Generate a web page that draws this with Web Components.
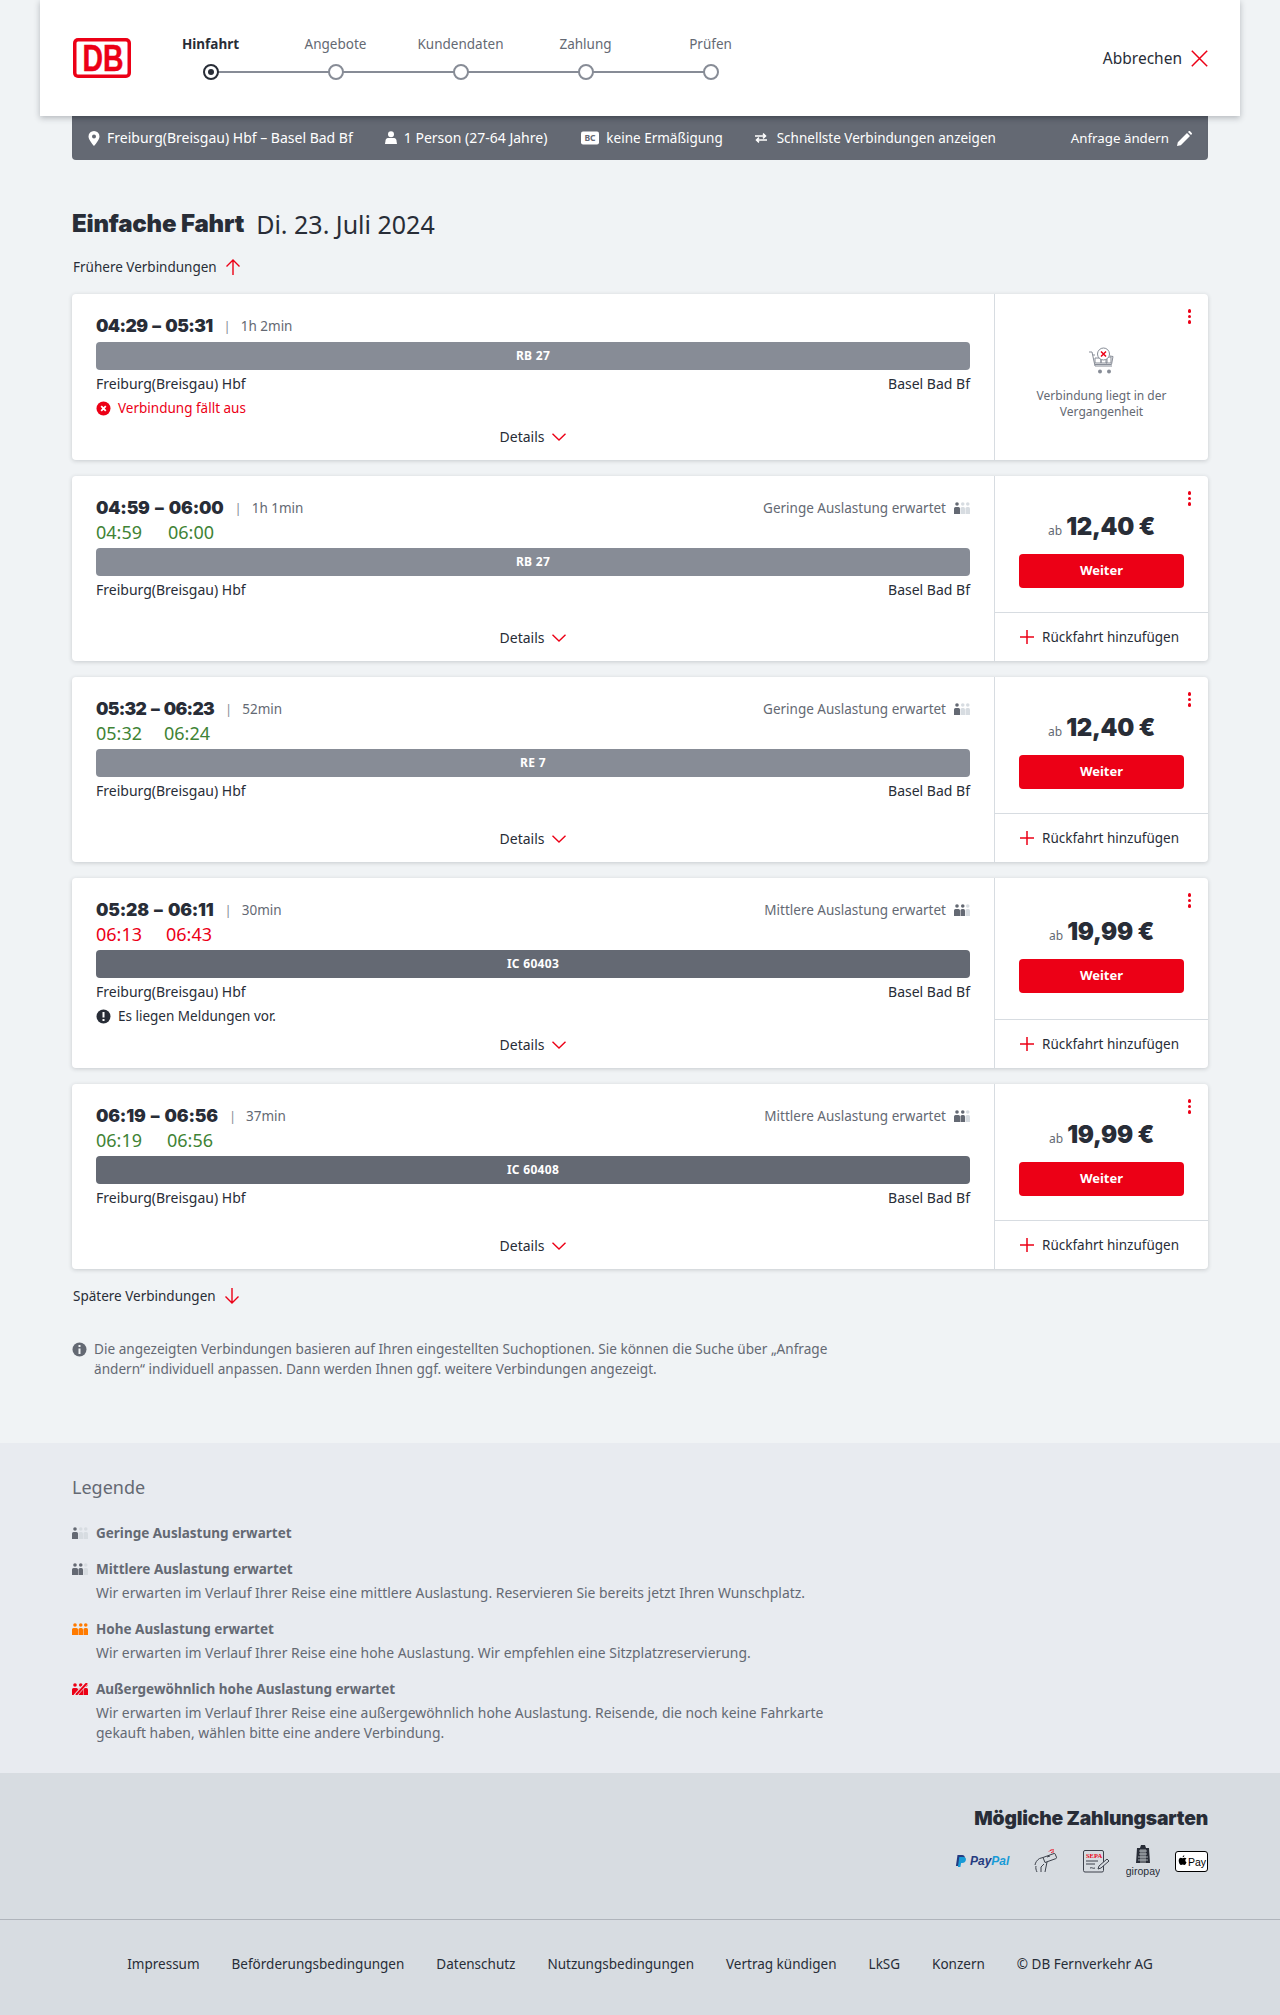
<!DOCTYPE html>
<html lang="de">
<head>
<meta charset="utf-8">
<title>Einfache Fahrt</title>
<style>
  html, body { margin: 0; padding: 0; }
  body {
    display: flex;
    flex-direction: column;
    min-height: 100vh;
    background: #f0f3f5;
    color: #282d37;
    font-family: "Noto Sans", "Liberation Sans", sans-serif;
    font-size: 13.500px;
    line-height: 20px;
  }
  :root { --head: Inter, "Liberation Sans", sans-serif; --red: #ec0016; --ink: #282d37; --grey: #646973; --mid: #878c96; --line: #d7dce1; }
</style>
</head>
<body>

<app-header></app-header>
<search-bar></search-bar>

<result-list>
  <span slot="title">Einfache Fahrt</span>
  <span slot="date">Di. 23. Juli 2024</span>

  <connection-card times="04:29 – 05:31" track="-.6" dur="1h 2min" train="RB 27" tone="light">
    <msg-line slot="msg" kind="error">Verbindung fällt aus</msg-line>
    <past-box slot="side"></past-box>
  </connection-card>

  <connection-card times="04:59 – 06:00" dur="1h 1min" rt1="04:59" rt2="06:00" rt-gap="26" load="1" train="RB 27" tone="light">
    <price-box slot="side" price="12,40 €"></price-box>
  </connection-card>

  <connection-card times="05:32 – 06:23" track="-.7" dur="52min" rt1="05:32" rt2="06:24" rt-gap="22" load="1" train="RE 7" tone="light">
    <price-box slot="side" price="12,40 €"></price-box>
  </connection-card>

  <connection-card times="05:28 – 06:11" dur="30min" rt1="06:13" rt2="06:43" rt-gap="24" late load="2" train="IC 60403" tone="dark">
    <msg-line slot="msg" kind="info">Es liegen Meldungen vor.</msg-line>
    <price-box slot="side" price="19,99 €"></price-box>
  </connection-card>

  <connection-card times="06:19 – 06:56" dur="37min" rt1="06:19" rt2="06:56" rt-gap="25" load="2" train="IC 60408" tone="dark">
    <price-box slot="side" price="19,99 €"></price-box>
  </connection-card>
</result-list>

<load-legend></load-legend>
<payment-methods></payment-methods>
<site-footer></site-footer>

<script>
const chevron = `<svg width="14" height="8" viewBox="0 0 14 8" fill="none" stroke="#ec0016" stroke-width="1.4"><path d="M.5.8 7 7 13.5.8"/></svg>`;

class AppHeader extends HTMLElement {
  constructor() {
    super();
    this.attachShadow({ mode: 'open' });
    const steps = ['Hinfahrt', 'Angebote', 'Kundendaten', 'Zahlung', 'Prüfen'];
    this.shadowRoot.innerHTML = `
      <style>
        :host { display: flex; align-items: center; position: relative; z-index: 2; height: 116px; margin: 0 40px; padding: 0 32px; background: #fff; box-shadow: 0 2px 6px rgba(40,45,55,.3); }
        .logo { display: block; margin: 0 0 0 1px; overflow: visible; }
        .logo text { font-family: "Liberation Sans", sans-serif; font-weight: 700; }
        ol { display: flex; list-style: none; margin: -2px 0 0 17px; padding: 0; }
        li { position: relative; width: 125px; display: flex; flex-direction: column; align-items: center; gap: 10px; color: var(--grey); }
        li b { color: var(--ink); font-weight: 700; }
        li span, li b { line-height: 20px; }
        i { display: block; position: relative; z-index: 1; box-sizing: border-box; width: 16px; height: 16px; border-radius: 50%; border: 2px solid var(--mid); background: #fff; }
        li:first-child i { border-color: var(--ink); }
        li:first-child i::after { content: ""; position: absolute; inset: 3px; border-radius: 50%; background: var(--ink); }
        li + li::before { content: ""; position: absolute; height: 2px; left: -62px; width: 125px; bottom: 7px; background: var(--mid); }
        a { margin-left: auto; display: flex; align-items: center; gap: 9px; font-size: 15.500px; }
      </style>
      <svg class="logo" width="58" height="40" viewBox="0 0 58 40">
        <rect width="58" height="40" rx="5" fill="#ec0016"/>
        <rect x="3.500" y="3.500" width="51" height="33" rx="1.500" fill="#fff"/>
        <text x="30" y="33" text-anchor="middle" font-size="36" fill="#ec0016" stroke="#ec0016" stroke-width=".5" textLength="41" lengthAdjust="spacingAndGlyphs">DB</text>
      </svg>
      <ol>${steps.map((s, n) => `<li>${n ? `<span>${s}</span>` : `<b>${s}</b>`}<i></i></li>`).join('')}</ol>
      <a>Abbrechen
        <svg width="17" height="17" viewBox="0 0 17 17" fill="none" stroke="#ec0016" stroke-width="1.500"><path d="m.8.8 15.400 15.400M16.200.8.8 16.200"/></svg>
      </a>`;
  }
}

class SearchBar extends HTMLElement {
  constructor() {
    super();
    this.attachShadow({ mode: 'open' });
    this.shadowRoot.innerHTML = `
      <style>
        :host { display: flex; align-items: center; height: 44px; margin: 0 72px; padding: 0 16px; gap: 32px; background: var(--grey); color: #fff; border-radius: 0 0 4px 4px; box-shadow: inset 0 5px 5px -4px rgba(40,45,55,.45); }
        span { display: flex; align-items: center; gap: 7px; white-space: nowrap; }
        .wide { font-size: 14px; }
        .end { margin-left: auto; gap: 8px; font-size: 13.300px; }
      </style>
      <span class="wide"><svg width="12" height="15" viewBox="0 0 12 15" fill="#fff"><path fill-rule="evenodd" d="M6 0a5.500 5.500 0 0 0-5.500 5.500C.5 9 6 15 6 15s5.500-6 5.500-9.500A5.500 5.500 0 0 0 6 0Zm0 7.500a2 2 0 1 1 0-4 2 2 0 0 1 0 4Z"/></svg>Freiburg(Breisgau) Hbf – Basel Bad Bf</span>
      <span class="wide"><svg width="12" height="14" viewBox="0 0 12 14" fill="#fff"><circle cx="6" cy="3.200" r="3"/><path d="M2.800 7h6.400c1.200 0 1.900 1 2.200 2.200L12 13H0l.6-3.800C.9 8 1.600 7 2.800 7Z"/></svg>1 Person (27-64 Jahre)</span>
      <span style="margin-left:2px"><svg width="18" height="14" viewBox="0 0 18 14"><rect y=".5" width="18" height="13" rx="2" fill="#fff"/><text x="9" y="10.300" text-anchor="middle" font-family="Noto Sans" font-weight="700" font-size="8.500" fill="#646973">BC</text></svg>keine Ermäßigung</span>
      <span style="margin-left:0;gap:10px"><svg width="12" height="10" viewBox="0 0 12 10" fill="none" stroke="#fff" stroke-width="1.500"><path d="M0 3h10M8 .6 10.500 3 8 5.400M12 7H2M4 4.600 1.500 7 4 9.400"/></svg>Schnellste Verbindungen anzeigen</span>
      <span class="end">Anfrage ändern<svg width="15" height="15" viewBox="0 0 15 15" fill="#fff"><path d="M0 15l.8-3.800L10 2l3 3-9.200 9.200L0 15ZM11 1l.7-.7a1 1 0 0 1 1.400 0l1.600 1.600a1 1 0 0 1 0 1.400L14 4l-3-3Z"/></svg></span>`;
  }
}

class ResultList extends HTMLElement {
  constructor() {
    super();
    this.attachShadow({ mode: 'open' });
    this.shadowRoot.innerHTML = `
      <style>
        :host { display: block; padding: 48px 72px 64px; }
        h1 { margin: 0; display: flex; gap: 12px; font-size: 25px; line-height: 32px; font-weight: 400; }
        h1 b { font-family: var(--head); font-weight: 900; font-size: 24px; letter-spacing: -.2px; }
        .more { display: flex; align-items: center; gap: 8px; height: 24px; margin: 15px 0 15px 1px; }
        .cards { display: flex; flex-direction: column; gap: 16px; }
        .note { display: flex; gap: 7px; width: 780px; margin-top: 31px; color: var(--grey); font-size: 13.600px; }
        .note svg { flex: none; margin-top: 3px; }
      </style>
      <h1><b><slot name="title"></slot></b><slot name="date"></slot></h1>
      <div class="more">Frühere Verbindungen
        <svg width="16" height="16" viewBox="0 0 16 16" fill="none" stroke="#ec0016" stroke-width="1.400"><path d="M8 16V1M1.500 7.500 8 1l6.500 6.500"/></svg>
      </div>
      <div class="cards"><slot></slot></div>
      <div class="more">Spätere Verbindungen
        <svg width="16" height="16" viewBox="0 0 16 16" fill="none" stroke="#ec0016" stroke-width="1.400"><path d="M8 0v15M1.500 8.500 8 15l6.500-6.500"/></svg>
      </div>
      <div class="note">
        <svg width="15" height="15" viewBox="0 0 15 15"><circle cx="7.500" cy="7.500" r="7" fill="#646973"/><path d="M6.500 6.500h2V12h-2zM6.500 3h2v2h-2z" fill="#f0f3f5"/></svg>
        <div>Die angezeigten Verbindungen basieren auf Ihren eingestellten Suchoptionen. Sie können die Suche über „Anfrage ändern“ individuell anpassen. Dann werden Ihnen ggf. weitere Verbindungen angezeigt.</div>
      </div>`;
  }
}

class OccIcon extends HTMLElement {
  connectedCallback() {
    this.attachShadow({ mode: 'open' });
    const level = Number(this.getAttribute('level') || 1);
    const on = this.getAttribute('color') || '#646973';
    const off = this.getAttribute('off') || '#d7dce1';
    const person = (x, c, w) => `<circle cx="${x + w / 2}" cy="2" r="1.800" fill="${c}"/><path d="M${x} 12V6.500a1.500 1.500 0 0 1 1.500-1.500h${w - 3}a1.500 1.500 0 0 1 1.500 1.500V12z" fill="${c}"/>`;
    let body = person(0, level >= 1 ? on : off, 6) + person(6.500, level >= 2 ? on : off, 4.500) + person(11.500, level >= 3 ? on : off, 4.500);
    if (level === 4) {
      body = person(0, on, 6) + person(6.500, on, 4.500) + person(11.500, on, 4.500)
        + `<path d="M3 13 15.500-1" stroke="#e8ebf0" stroke-width="3.500"/><path d="M4 12 15 0" stroke="${on}" stroke-width="2"/>`;
    }
    this.shadowRoot.innerHTML = `
      <style>:host { display: inline-flex; } svg { display: block; }</style>
      <svg width="16" height="12" viewBox="0 0 16 12">${body}</svg>`;
  }
}

class MsgLine extends HTMLElement {
  connectedCallback() {
    this.attachShadow({ mode: 'open' });
    const error = this.getAttribute('kind') === 'error';
    const icon = error
      ? `<svg width="15" height="15" viewBox="0 0 15 15"><circle cx="7.500" cy="7.500" r="7" fill="#ec0016"/><path d="m5.200 5.200 4.600 4.600m0-4.600L5.200 9.800" stroke="#fff" stroke-width="1.800"/></svg>`
      : `<svg width="15" height="15" viewBox="0 0 15 15"><circle cx="7.500" cy="7.500" r="7" fill="#282d37"/><path d="M6.500 3h2v5.500h-2zM6.500 10h2v2h-2z" fill="#fff"/></svg>`;
    this.shadowRoot.innerHTML = `
      <style>
        :host { display: flex; align-items: center; gap: 7px; height: 20px; color: ${error ? 'var(--red)' : 'var(--ink)'}; }
        svg { display: block; }
      </style>${icon}<slot></slot>`;
  }
}

class ConnectionCard extends HTMLElement {
  connectedCallback() {
    this.attachShadow({ mode: 'open' });
    const a = n => this.getAttribute(n);
    const load = a('load');
    const loadText = load === '2' ? 'Mittlere Auslastung erwartet' : 'Geringe Auslastung erwartet';
    this.shadowRoot.innerHTML = `
      <style>
        :host { display: flex; background: #fff; border-radius: 4px; box-shadow: 0 1px 4px rgba(40,45,55,.2); }
        .main { flex: none; box-sizing: border-box; width: 922px; padding: 20px 24px 11px; display: flex; flex-direction: column; }
        .side { flex: 1; display: flex; flex-direction: column; position: relative; border-left: 1px solid var(--line); }
        .dots { position: absolute; top: 15px; right: 17px; display: flex; flex-direction: column; gap: 2px; }
        .dots i { width: 3.500px; height: 3.500px; border-radius: 50%; background: var(--red); }
        .top { display: flex; align-items: center; height: 24px; color: var(--grey); }
        .time { font-family: var(--head); font-weight: 900; font-size: 17.500px; letter-spacing: ${a('track') || -.2}px; word-spacing: 2px; color: var(--ink); }
        .sep { margin: 0 10px 0 11px; color: var(--mid); font-size: 13px; }
        .load { margin-left: auto; display: flex; align-items: center; gap: 8px; }
        .rt { display: flex; height: 24px; font-size: 18px; line-height: 24px; color: ${a('late') !== null ? '#ec0016' : '#408335'}; gap: ${a('rt-gap') || 24}px; }
        .bar { height: 28px; border-radius: 4px; margin-top: 4px; background: ${a('tone') === 'dark' ? '#646973' : '#878c96'}; color: #fff; font-weight: 700; font-size: 12px; line-height: 28px; text-align: center; letter-spacing: .3px; }
        .ends { display: flex; justify-content: space-between; margin-top: 4px; font-size: 14px; }
        .msg { min-height: 26px; box-sizing: border-box; padding-top: 4px; }
        ::slotted([slot=msg]) { margin-bottom: 7px; }
        .details { display: flex; align-items: center; justify-content: center; gap: 8px; height: 24px; font-size: 14px; }
      </style>
      <div class="main">
        <div class="top">
          <span class="time">${a('times')}</span><span class="sep">|</span><span>${a('dur')}</span>
          ${load ? `<span class="load">${loadText}<occ-icon level="${load}"></occ-icon></span>` : ''}
        </div>
        ${a('rt1') ? `<div class="rt"><span>${a('rt1')}</span><span>${a('rt2')}</span></div>` : ''}
        <div class="bar">${a('train')}</div>
        <div class="ends"><span>Freiburg(Breisgau) Hbf</span><span>Basel Bad Bf</span></div>
        <div class="msg"><slot name="msg"></slot></div>
        <div class="details">Details ${chevron}</div>
      </div>
      <div class="side">
        <div class="dots"><i></i><i></i><i></i></div>
        <slot name="side"></slot>
      </div>`;
  }
}

class PriceBox extends HTMLElement {
  connectedCallback() {
    this.attachShadow({ mode: 'open' });
    this.shadowRoot.innerHTML = `
      <style>
        :host { display: flex; flex-direction: column; flex: 1; }
        .top { flex: 1; display: flex; flex-direction: column; justify-content: center; padding: 12px 24px 0; box-sizing: border-box; }
        .price { display: flex; align-items: baseline; justify-content: center; gap: 4px; height: 30px; line-height: 30px; margin-bottom: 12px; }
        small { font-size: 12px; color: var(--grey); }
        b { font-family: var(--head); font-weight: 900; font-size: 24px; letter-spacing: -.3px; color: var(--ink); }
        button { display: block; width: 100%; height: 34px; padding: 0 0 2px; border: 0; border-radius: 4px; background: var(--red); color: #fff; font: 700 13px/32px "Noto Sans", sans-serif; }
        .back { flex: none; height: 49px; display: flex; align-items: center; gap: 7px; padding: 0 0 0 24px; box-sizing: border-box; border-top: 1px solid var(--line); }
      </style>
      <div class="top">
        <div class="price"><small>ab</small><b>${this.getAttribute('price')}</b></div>
        <button>Weiter</button>
      </div>
      <div class="back">
        <svg width="16" height="16" viewBox="0 0 16 16" stroke="#ec0016" stroke-width="1.500"><path d="M8 1v14M1 8h14"/></svg>
        Rückfahrt hinzufügen
      </div>`;
  }
}

class PastBox extends HTMLElement {
  connectedCallback() {
    this.attachShadow({ mode: 'open' });
    this.shadowRoot.innerHTML = `
      <style>
        :host { display: flex; flex-direction: column; align-items: center; padding-top: 53px; color: var(--grey); font-size: 12px; line-height: 16px; text-align: center; }
        div { margin-top: 13px; width: 150px; }
        svg { display: block; }
      </style>
      <svg width="27" height="28" viewBox="0 0 27 28" fill="none" stroke="#878c96" stroke-width="1">
        <path d="M1 5h3l3 14h17"/>
        <path d="M5 8h2M22 9l3 .5-1.500 8H7"/>
        <path d="M7 11h6v5H7zM13 12h6v4h-6zM18 10h5v6h-5z"/>
        <circle cx="15.500" cy="7" r="6" fill="#fff"/>
        <path d="m13 4.500 5 5m0-5-5 5" stroke="#ec0016" stroke-width="1.500"/>
        <circle cx="12" cy="24.500" r="2" fill="#878c96" stroke="none"/>
        <circle cx="21" cy="24.500" r="2" fill="#878c96" stroke="none"/>
      </svg>
      <div>Verbindung liegt in der Vergangenheit</div>`;
  }
}

class LoadLegend extends HTMLElement {
  constructor() {
    super();
    this.attachShadow({ mode: 'open' });
    const rows = [
      [1, '#646973', 'Geringe Auslastung erwartet', ''],
      [2, '#646973', 'Mittlere Auslastung erwartet', 'Wir erwarten im Verlauf Ihrer Reise eine mittlere Auslastung. Reservieren Sie bereits jetzt Ihren Wunschplatz.'],
      [3, '#ff7a00', 'Hohe Auslastung erwartet', 'Wir erwarten im Verlauf Ihrer Reise eine hohe Auslastung. Wir empfehlen eine Sitzplatzreservierung.'],
      [4, '#ec0016', 'Außergewöhnlich hohe Auslastung erwartet', 'Wir erwarten im Verlauf Ihrer Reise eine außergewöhnlich hohe Auslastung. Reisende, die noch keine Fahrkarte gekauft haben, wählen bitte eine andere Verbindung.']
    ];
    this.shadowRoot.innerHTML = `
      <style>
        :host { display: block; padding: 32px 72px 30px; background: #e8ebf0; color: var(--grey); }
        h2 { margin: 0 0 24px; font-size: 18px; line-height: 24px; font-weight: 400; }
        .row { display: grid; grid-template-columns: 24px 770px; margin-top: 16px; }
        occ-icon { margin-top: 4px; }
        b { display: block; }
        p { margin: 4px 0 0; font-size: 13.900px; }
      </style>
      <h2>Legende</h2>
      ${rows.map(r => `
        <div class="row">
          <occ-icon level="${r[0]}" color="${r[1]}"></occ-icon>
          <div><b>${r[2]}</b>${r[3] ? `<p>${r[3]}</p>` : ''}</div>
        </div>`).join('')}`;
  }
}

class PaymentMethods extends HTMLElement {
  constructor() {
    super();
    this.attachShadow({ mode: 'open' });
    this.shadowRoot.innerHTML = `
      <style>
        :host { display: block; padding: 31px 72px 41px; background: #d7dce1; text-align: right; }
        h2 { margin: 0 0 12px; font: 900 19.300px/28px var(--head); letter-spacing: -.2px; color: var(--ink); }
        .logos { display: flex; justify-content: flex-end; align-items: center; height: 34px; }
        svg { display: block; }
        text { font-family: "Liberation Sans", sans-serif; }
      </style>
      <h2>Mögliche Zahlungsarten</h2>
      <div class="logos">
        <svg width="57" height="14" viewBox="0 0 57 14">
          <path d="M2.500 1H7c2.200 0 3.200 1.300 2.800 3.200C9.400 6.300 8 7.400 5.900 7.400H4.600L3.800 12H.9z" fill="#253b80"/>
          <path d="M4.300 3h4c2 0 3 1 2.600 3-.4 2-1.700 3-3.700 3H6.100l-.7 4H2.900z" fill="#179bd7"/>
          <text x="15" y="11" font-size="12" font-weight="700" font-style="italic" fill="#253b80">Pay<tspan fill="#179bd7">Pal</tspan></text>
        </svg>
        <svg style="margin-left:22px" width="24" height="24" viewBox="0 0 24 24" fill="none" stroke="#3c414b" stroke-width="1">
          <path d="M9 8.500 20 4.500a1 1 0 0 1 1.200.6l1.300 3.200a1 1 0 0 1-.6 1.300L11 13.500"/>
          <path d="M1 16c.4-2.500 2-5 4.500-6.500L9 8.500l2 5M13 8l3-1"/>
          <path d="M3 23c-1-2-1.500-4-1-6M7 23v-5l3-3M11 23l1-5 1-5"/>
          <path d="M15 2.500c1-1.500 3-2 5-1.500M17 4c1-1 2-1.300 3-1" stroke="#ec0016"/>
        </svg>
        <svg style="margin-left:25px" width="27" height="23" viewBox="0 0 27 23" fill="none" stroke="#3c414b" stroke-width="1">
          <rect x=".5" y=".5" width="20" height="21.500" rx="1.500"/>
          <text x="3" y="8" font-size="6.500" font-weight="700" fill="#ec0016" stroke="none" style="font-family:'Liberation Serif',serif">SEPA</text>
          <path d="M3 11h12M3 14h9M7 18c2-1 3 1 5 0"/>
          <path d="M15 19l1-3 8-7 2 2-8 7z" fill="#d7dce1"/>
        </svg>
        <svg style="margin-left:16px" width="34" height="32" viewBox="0 0 34 32">
          <path d="M15 0h4l1 3h3l1 15H10l1-15h3z" fill="#282d37"/>
          <path d="M13 6h8M13 9h8M12 12h10M12 15h10M15 4v14M17 4v14M19 4v14" stroke="#d7dce1" stroke-width=".7"/>
          <text x="17" y="30" text-anchor="middle" font-size="10.500" fill="#282d37">giropay</text>
        </svg>
        <svg style="margin-left:15px" width="33" height="21" viewBox="0 0 33 21">
          <rect x=".5" y=".5" width="32" height="20" rx="2.500" fill="#fff" stroke="#000"/>
          <path d="M9.500 6.700c-.8 0-1.200.5-1.900.5s-1.100-.5-1.800-.5C4.700 6.700 3.700 7.800 3.700 9.700c0 2 1.300 4.300 2.400 4.300.6 0 .9-.4 1.600-.4s1 .4 1.600.4c1 0 2-1.800 2.200-2.800-1.600-.7-1.600-3 0-3.700-.5-.6-1.200-.8-2-.8ZM7.700 6.300c.9 0 1.700-1 1.600-2-.9.100-1.800 1-1.600 2Z" fill="#000"/>
          <text x="13" y="14.500" font-size="10.500" fill="#000">Pay</text>
        </svg>
      </div>`;
  }
}

class SiteFooter extends HTMLElement {
  constructor() {
    super();
    this.attachShadow({ mode: 'open' });
    const links = ['Impressum', 'Beförderungsbedingungen', 'Datenschutz', 'Nutzungsbedingungen', 'Vertrag kündigen', 'LkSG', 'Konzern', '© DB Fernverkehr AG'];
    this.shadowRoot.innerHTML = `
      <style>
        :host { display: flex; flex: 1; justify-content: center; align-items: flex-start; gap: 32px; padding-top: 34px; background: #d7dce1; border-top: 1px solid #afb4bb; }
      </style>
      ${links.map(l => `<span>${l}</span>`).join('')}`;
  }
}

customElements.define('app-header', AppHeader);
customElements.define('search-bar', SearchBar);
customElements.define('result-list', ResultList);
customElements.define('occ-icon', OccIcon);
customElements.define('msg-line', MsgLine);
customElements.define('connection-card', ConnectionCard);
customElements.define('price-box', PriceBox);
customElements.define('past-box', PastBox);
customElements.define('load-legend', LoadLegend);
customElements.define('payment-methods', PaymentMethods);
customElements.define('site-footer', SiteFooter);
</script>
</body>
</html>
